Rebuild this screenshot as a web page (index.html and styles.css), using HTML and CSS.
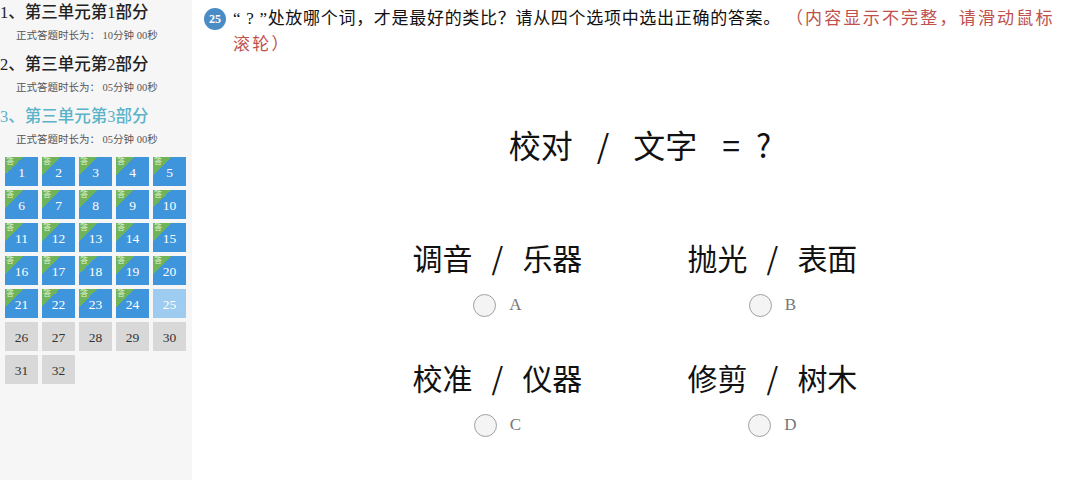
FILE: index.html
```html
<!DOCTYPE html>
<html lang="zh">
<head>
<meta charset="utf-8">
<link rel="stylesheet" href="styles.css">
</head>
<body>
<aside class="sidebar">
  <div class="section">
    <div class="sec-title">1、第三单元第1部分</div>
    <div class="sec-time">正式答题时长为： 10分钟 00秒</div>
  </div>
  <div class="section">
    <div class="sec-title">2、第三单元第2部分</div>
    <div class="sec-time">正式答题时长为： 05分钟 00秒</div>
  </div>
  <div class="section">
    <div class="sec-title active">3、第三单元第3部分</div>
    <div class="sec-time">正式答题时长为： 05分钟 00秒</div>
  </div>
  <div class="grid">
    <div class="tile done"><span class="mark">答</span>1</div>
    <div class="tile done"><span class="mark">答</span>2</div>
    <div class="tile done"><span class="mark">答</span>3</div>
    <div class="tile done"><span class="mark">答</span>4</div>
    <div class="tile done"><span class="mark">答</span>5</div>
    <div class="tile done"><span class="mark">答</span>6</div>
    <div class="tile done"><span class="mark">答</span>7</div>
    <div class="tile done"><span class="mark">答</span>8</div>
    <div class="tile done"><span class="mark">答</span>9</div>
    <div class="tile done"><span class="mark">答</span>10</div>
    <div class="tile done"><span class="mark">答</span>11</div>
    <div class="tile done"><span class="mark">答</span>12</div>
    <div class="tile done"><span class="mark">答</span>13</div>
    <div class="tile done"><span class="mark">答</span>14</div>
    <div class="tile done"><span class="mark">答</span>15</div>
    <div class="tile done"><span class="mark">答</span>16</div>
    <div class="tile done"><span class="mark">答</span>17</div>
    <div class="tile done"><span class="mark">答</span>18</div>
    <div class="tile done"><span class="mark">答</span>19</div>
    <div class="tile done"><span class="mark">答</span>20</div>
    <div class="tile done"><span class="mark">答</span>21</div>
    <div class="tile done"><span class="mark">答</span>22</div>
    <div class="tile done"><span class="mark">答</span>23</div>
    <div class="tile done"><span class="mark">答</span>24</div>
    <div class="tile current">25</div>
    <div class="tile">26</div>
    <div class="tile">27</div>
    <div class="tile">28</div>
    <div class="tile">29</div>
    <div class="tile">30</div>
    <div class="tile">31</div>
    <div class="tile">32</div>
  </div>
</aside>
<main class="main">
  <div class="question">
    <span class="qnum">25</span>
    <p class="qtext">“ ? ”处放哪个词，才是最好的类比？请从四个选项中选出正确的答案。 <span class="hint">（内容显示不完整，请滑动鼠标滚轮）</span></p>
  </div>
  <div class="prompt">
    <span>校对</span><span class="op">/</span><span>文字</span><span class="op eq">=</span><span>?</span>
  </div>
  <div class="options">
    <div class="option">
      <div class="opt-text"><span>调音</span><span>/</span><span>乐器</span></div>
      <label class="opt-choice"><span class="radio"></span>A</label>
    </div>
    <div class="option">
      <div class="opt-text"><span>抛光</span><span>/</span><span>表面</span></div>
      <label class="opt-choice"><span class="radio"></span>B</label>
    </div>
    <div class="option">
      <div class="opt-text"><span>校准</span><span>/</span><span>仪器</span></div>
      <label class="opt-choice"><span class="radio"></span>C</label>
    </div>
    <div class="option">
      <div class="opt-text"><span>修剪</span><span>/</span><span>树木</span></div>
      <label class="opt-choice"><span class="radio"></span>D</label>
    </div>
  </div>
</main>
</body>
</html>
```

FILE: styles.css
```css
html, body {
  margin: 0;
  padding: 0;
}
body {
  display: flex;
  width: 1078px;
  height: 480px;
  overflow: hidden;
  background: #ffffff;
  font-family: "Liberation Serif", "Noto Sans CJK SC", serif;
  color: #222;
}
.sidebar {
  width: 192px;
  flex: none;
  background: #f6f6f6;
  box-sizing: border-box;
  padding-top: 2px;
}
.section {
  margin-bottom: 8px;
}
.sec-title {
  font-size: 16.5px;
  line-height: 22px;
  color: #222;
  font-weight: 500;
}
.sec-title.active {
  color: #5ab3c9;
}
.sec-time {
  font-size: 10.5px;
  line-height: 20px;
  padding-left: 16px;
  color: #555;
  margin-top: 2px;
}
.grid {
  display: grid;
  grid-template-columns: repeat(5, 33px);
  grid-auto-rows: 29px;
  gap: 4px;
  padding-left: 5px;
  margin-top: -1px;
}
.tile {
  position: relative;
  display: flex;
  align-items: center;
  justify-content: center;
  background: #d8d8d8;
  color: #333;
  font-size: 13.5px;
  padding-top: 3px;
  box-sizing: border-box;
  overflow: hidden;
}
.tile.done {
  background: #3f95dc;
  color: #fff;
}
.tile.current {
  background: #9ecbf0;
  color: #fff;
}
.tile .mark {
  position: absolute;
  left: 0;
  top: 0;
  width: 18px;
  height: 18px;
  background: linear-gradient(135deg, #6fb35a 50%, transparent 50%);
  font-size: 8px;
  line-height: 9px;
  color: #e4f3d4;
  text-indent: 1px;
}
.main {
  flex: 1;
  padding: 8px 12px 0 12px;
  box-sizing: border-box;
}
.question {
  display: flex;
  align-items: flex-start;
  gap: 7px;
  padding-right: 3px;
}
.qnum {
  flex: none;
  width: 22px;
  height: 22px;
  border-radius: 50%;
  background: #4a8dc6;
  color: #fff;
  font-size: 12px;
  font-weight: bold;
  display: flex;
  align-items: center;
  justify-content: center;
}
.qtext {
  margin: -2px 0 0;
  font-size: 17px;
  line-height: 26px;
  color: #111;
  letter-spacing: 0.7px;
  line-break: anywhere;
}
.hint {
  color: #c0504d;
  letter-spacing: 2.2px;
}
.prompt {
  margin-top: 64px;
  display: flex;
  justify-content: center;
  font-family: "Noto Sans CJK SC", sans-serif;
  font-size: 32px;
  line-height: 44px;
  color: #111;
  padding-left: 10px;
}
.prompt .op {
  margin: 0 24px;
}
.prompt .op.eq {
  margin: 0 16px 0 25px;
}
.options {
  display: grid;
  grid-template-columns: 275px 275px;
  justify-content: center;
  row-gap: 37px;
  margin-top: 71px;
}
.option {
  display: flex;
  flex-direction: column;
  align-items: center;
}
.opt-text {
  display: flex;
  gap: 19px;
  font-family: "Noto Sans CJK SC", sans-serif;
  font-size: 30px;
  line-height: 40px;
  color: #111;
}
.opt-choice {
  display: flex;
  align-items: center;
  gap: 13px;
  margin-top: 13px;
  font-size: 17px;
  color: #777;
  height: 30px;
}
.radio {
  width: 21px;
  height: 21px;
  border-radius: 50%;
  border: 1px solid #a0a0a0;
  background: #f4f4f4;
}
```
